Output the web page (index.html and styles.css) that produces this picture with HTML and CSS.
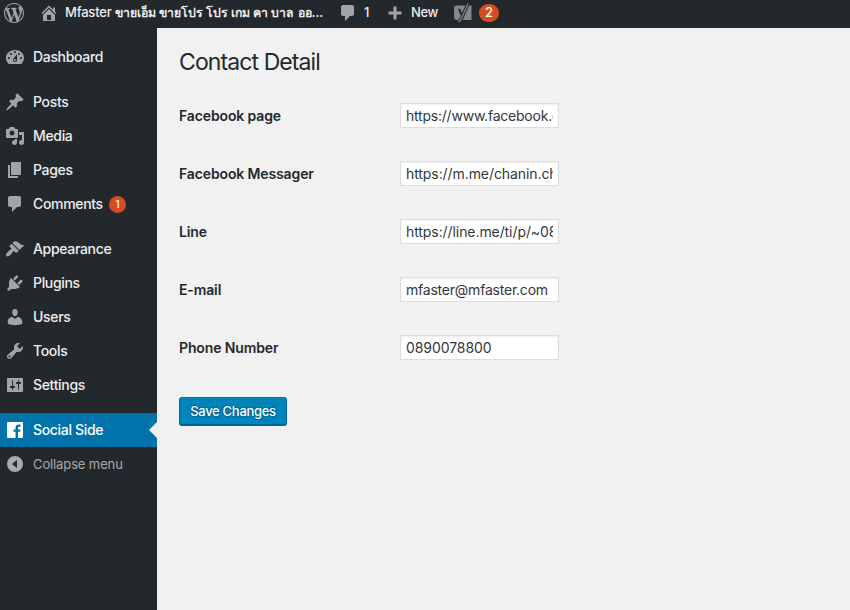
FILE: index.html
```html
<!DOCTYPE html>
<html lang="th">
<head>
<meta charset="utf-8">
<title>Contact Detail</title>
<link rel="stylesheet" href="styles.css">
</head>
<body>
<header class="bar">
  <svg class="icon logo" viewBox="0 0 20 20"><path d="M20 10c0-5.51-4.49-10-10-10C4.48 0 0 4.49 0 10c0 5.52 4.48 10 10 10 5.51 0 10-4.48 10-10zM7.78 15.37L4.37 6.22c.55-.02 1.17-.08 1.17-.08.5-.06.44-1.13-.06-1.11 0 0-1.45.11-2.37.11-.18 0-.37 0-.58-.01C4.12 2.69 6.87 1.11 10 1.11c2.33 0 4.45.87 6.05 2.34-.68-.11-1.65.39-1.65 1.58 0 .74.45 1.36.9 2.1.35.61.55 1.36.55 2.46 0 1.49-1.4 5-1.4 5l-3.03-8.37c.54-.02.82-.17.82-.17.5-.05.44-1.25-.06-1.22 0 0-1.44.12-2.38.12-.87 0-2.33-.12-2.33-.12-.5-.03-.56 1.2-.06 1.22l.92.08 1.26 3.41zM17.41 10c.24-.64.74-1.87.43-4.25.7 1.29 1.05 2.71 1.05 4.25 0 3.29-1.73 6.24-4.4 7.78.97-2.59 1.94-5.2 2.92-7.78zM6.1 18.09C3.12 16.65 1.11 13.53 1.11 10c0-1.3.23-2.48.72-3.59C3.25 10.3 4.67 14.2 6.1 18.09zm4.03-6.63l2.58 6.98c-.86.29-1.76.45-2.71.45-.79 0-1.57-.11-2.29-.33.81-2.38 1.62-4.74 2.42-7.1z"/></svg>
  <a class="bar-item site"><svg class="icon" viewBox="0 0 20 20"><path d="M16 8.5l1.53 1.53-1.06 1.06L10 4.6l-6.47 6.49-1.06-1.06L10 2.5l4 4v-2h2v4zm-6-2.46l6 5.99V18H4v-5.97zM12 17v-5H8v5h4z"/></svg><span class="site-latin">Mfaster</span><span class="site-thai">ขายเอ็ม ขายโปร โปร เกม คา บาล ออ...</span></a>
  <a class="bar-item talk"><svg class="icon" viewBox="0 0 20 20"><path d="M5 2h9c1.1 0 2 .9 2 2v7c0 1.1-.9 2-2 2h-2l-5 5v-5H5c-1.1 0-2-.9-2-2V4c0-1.1.9-2 2-2z"/></svg><span>1</span></a>
  <a class="bar-item new"><svg class="icon" viewBox="0 0 20 20"><path d="M8.5 3.5h3v5h5v3h-5v5h-3v-5h-5v-3h5z"/></svg><span>New</span></a>
  <a class="bar-item seo"><svg class="icon yoast" viewBox="0 0 20 20"><path class="tile" d="M4 2.5h14.500V17H4a3 3 0 0 1-3-3V5.500a3 3 0 0 1 3-3z"/><path class="leg" d="M6 6l3.400 7.500"/><path class="outline" d="M9.400 13.500L15 .5M9.400 13.500c-.8 2.900-1.800 4.700-4.200 5"/><path class="stroke" d="M9.400 13.500L15 .5M9.400 13.500c-.9 2.900-1.900 4.700-4.200 5"/></svg><span class="badge wide">2</span></a>
</header>
<div class="shell">
  <nav class="side">
    <a class="item"><svg class="icon" viewBox="0 0 20 20"><path fill-rule="evenodd" d="M3.76 17h12.48c1.34-1.42 2.76-3.57 2.76-6 0-4.97-4.03-8-9-8s-9 3.03-9 8c0 2.43 1.42 4.58 2.76 6zM10 4c.55 0 1 .45 1 1s-.45 1-1 1-1-.45-1-1 .45-1 1-1zM6 6c.55 0 1 .45 1 1s-.45 1-1 1-1-.45-1-1 .45-1 1-1zm8 0c.55 0 1 .45 1 1s-.45 1-1 1-1-.45-1-1 .45-1 1-1zm-5.37 5.55L12 7v6c0 1.1-.9 2-2 2s-2-.9-2-2c0-.57.24-1.08.63-1.45zM4 10c.55 0 1 .45 1 1s-.45 1-1 1-1-.45-1-1 .45-1 1-1zm12 0c.55 0 1 .45 1 1s-.45 1-1 1-1-.45-1-1 .45-1 1-1zm-5 3c0-.55-.45-1-1-1s-1 .45-1 1 .45 1 1 1 1-.45 1-1z"/></svg><span>Dashboard</span></a>
    <a class="item group"><svg class="icon" viewBox="0 0 20 20"><path d="M10.44 3.02l1.82-1.82 6.36 6.35-1.83 1.82c-1.05-.68-2.48-.57-3.41.36l-.75.75c-.92.93-1.04 2.35-.35 3.41l-1.83 1.82-2.41-2.41-2.8 2.79c-.42.42-3.38 2.71-3.8 2.29s1.86-3.39 2.28-3.81l2.79-2.79L4.1 9.36l1.83-1.82c1.05.69 2.48.57 3.4-.36l.75-.75c.93-.92 1.05-2.35.36-3.41z"/></svg><span>Posts</span></a>
    <a class="item"><svg class="icon" viewBox="0 0 20 20"><path fill-rule="evenodd" d="M13 11V4c0-.55-.45-1-1-1h-1.67L9 1H5L3.67 3H2c-.55 0-1 .45-1 1v7c0 .55.45 1 1 1h10c.55 0 1-.45 1-1zM7 4.5c1.38 0 2.5 1.12 2.5 2.5S8.38 9.5 7 9.5 4.5 8.38 4.5 7 5.62 4.5 7 4.5zM14 6h5v10.5c0 1.38-1.12 2.5-2.5 2.5S14 17.88 14 16.5s1.12-2.5 2.5-2.5c.17 0 .34.02.5.05V9h-3V6zm-4 8.05V13h2v3.5c0 1.38-1.12 2.5-2.5 2.5S7 17.88 7 16.5 8.12 14 9.5 14c.17 0 .34.02.5.05z"/></svg><span>Media</span></a>
    <a class="item"><svg class="icon" viewBox="0 0 20 20"><path d="M6 15V2h10v13H6zm-1 1h8v2H3V5h2v11z"/></svg><span>Pages</span></a>
    <a class="item"><svg class="icon" viewBox="0 0 20 20"><path d="M5 2h9c1.1 0 2 .9 2 2v7c0 1.1-.9 2-2 2h-2l-5 5v-5H5c-1.1 0-2-.9-2-2V4c0-1.1.9-2 2-2z"/></svg><span class="comments">Comments</span><span class="badge">1</span></a>
    <a class="item group"><svg class="icon" viewBox="0 0 20 20"><path d="M14.48 11.06L7.41 3.99l1.5-1.5c.5-.56 2.3-.47 3.51.32 1.21.8 1.43 1.28 2.91 2.1 1.18.64 2.45 1.26 4.45.85zm-.71.71L6.7 4.7 4.93 6.47c-.39.39-.39 1.02 0 1.41l1.06 1.06c.39.39.39 1.03 0 1.42-.6.6-1.43 1.11-2.21 1.69-.35.26-.7.53-1.01.84C1.43 14.23.4 16.08 1.4 17.07c.99 1 2.84-.03 4.18-1.36.31-.31.58-.66.85-1.02.57-.78 1.08-1.61 1.69-2.21.39-.39 1.02-.39 1.41 0l1.06 1.06c.39.39 1.02.39 1.41 0z"/></svg><span>Appearance</span></a>
    <a class="item"><svg class="icon" viewBox="0 0 20 20"><path d="M13.11 4.36L9.87 7.6 8 5.73l3.24-3.24c.35-.34 1.05-.2 1.56.32.52.51.66 1.21.31 1.55zm-8 1.77l.91-1.12 9.01 9.01-1.19.84c-.71.71-2.63 1.16-3.82 1.16H6.14L4.9 17.26c-.59.59-1.54.59-2.12 0-.59-.58-.59-1.53 0-2.12l1.24-1.24v-3.88c0-1.13.4-3.19 1.09-3.89zm7.26 3.97l3.24-3.24c.34-.35 1.04-.21 1.55.31.52.51.66 1.21.31 1.55l-3.24 3.25z"/></svg><span>Plugins</span></a>
    <a class="item"><svg class="icon" viewBox="0 0 20 20"><path d="M10 9.25c-2.27 0-2.73-3.44-2.73-3.44C7 4.02 7.82 2 9.97 2c2.16 0 2.98 2.02 2.71 3.81 0 0-.41 3.44-2.68 3.44zm0 2.57L12.72 10c2.39 0 4.52 2.33 4.52 4.53v2.49s-3.65 1.13-7.24 1.13c-3.65 0-7.24-1.13-7.24-1.13v-2.49c0-2.25 1.94-4.48 4.47-4.48z"/></svg><span>Users</span></a>
    <a class="item"><svg class="icon" viewBox="0 0 20 20"><path fill-rule="evenodd" d="M16.68 9.77c-1.34 1.34-3.3 1.67-4.95.99l-5.41 6.52c-.99.99-2.59.99-3.58 0s-.99-2.59 0-3.57l6.52-5.42c-.68-1.65-.35-3.61.99-4.95 1.28-1.28 3.12-1.62 4.72-1.06l-2.89 2.89 2.82 2.82 2.86-2.87c.53 1.58.18 3.39-1.08 4.65zM3.81 16.21c.4.39 1.04.39 1.43 0 .4-.4.4-1.04 0-1.43-.39-.4-1.03-.4-1.43 0-.39.39-.39 1.03 0 1.43z"/></svg><span>Tools</span></a>
    <a class="item"><svg class="icon" viewBox="0 0 20 20"><path fill-rule="evenodd" d="M18 16V4c0-.55-.45-1-1-1H3c-.55 0-1 .45-1 1v12c0 .55.45 1 1 1h14c.55 0 1-.45 1-1zM8 11h1c.55 0 1 .45 1 1s-.45 1-1 1H8v1.5c0 .28-.22.5-.5.5s-.5-.22-.5-.5V13H6c-.55 0-1-.45-1-1s.45-1 1-1h1V5.5c0-.28.22-.5.5-.5s.5.22.5.5V11zm5-2h-1c-.55 0-1-.45-1-1s.45-1 1-1h1V5.5c0-.28.22-.5.5-.5s.5.22.5.5V7h1c.55 0 1 .45 1 1s-.45 1-1 1h-1v5.5c0 .28-.22.5-.5.5s-.5-.22-.5-.5V9z"/></svg><span>Settings</span></a>
    <a class="item group current"><svg class="icon" viewBox="0 0 20 20"><path d="M2.89 2h14.23c.49 0 .88.39.88.88v14.24c0 .48-.39.88-.88.88h-4.08v-6.2h2.08l.31-2.41h-2.39V7.85c0-.7.2-1.18 1.2-1.18h1.28V4.51c-.22-.03-.98-.09-1.86-.09-1.85 0-3.11 1.12-3.11 3.19v1.78H8.46v2.41h2.09V18H2.89c-.49 0-.89-.4-.89-.88V2.88c0-.49.4-.88.89-.88z"/></svg><span>Social Side</span></a>
    <a class="item collapse"><svg class="icon" viewBox="0 0 20 20"><path fill-rule="evenodd" d="M10 2a8 8 0 1 1 0 16 8 8 0 0 1 0-16zm2 4L7 10l5 4z"/></svg><span>Collapse menu</span></a>
  </nav>
  <main class="content">
    <h1>Contact Detail</h1>
    <form>
      <div class="row"><label for="fb">Facebook page</label><input id="fb" class="tight" value="https://www.facebook.com/"></div>
      <div class="row"><label for="me">Facebook Messager</label><input id="me" value="https://m.me/chanin.ch"></div>
      <div class="row"><label for="ln">Line</label><input id="ln" value="https://line.me/ti/p/~0890078800"></div>
      <div class="row"><label for="em">E-mail</label><input id="em" class="tight" value="mfaster@mfaster.com"></div>
      <div class="row"><label for="ph">Phone Number</label><input id="ph" value="0890078800"></div>
      <button type="button">Save Changes</button>
    </form>
  </main>
</div>
</body>
</html>
```
FILE: styles.css
```css
* { box-sizing: border-box; }
body {
  margin: 0;
  height: 610px;
  overflow: hidden;
  background: #f1f1f1;
  color: #23282d;
  font-family: Inter, "Noto Sans", sans-serif;
  font-size: 14px;
}
.icon {
  flex: none;
  width: 20px;
  height: 20px;
  fill: #a0a5aa;
}
.bar {
  display: flex;
  align-items: center;
  height: 28px;
  padding: 0 0 3px 4px;
  background: #23282d;
  color: #eee;
  font-size: 13px;
  font-weight: 500;
  line-height: 25px;
  white-space: nowrap;
}
.bar-item { display: flex; align-items: center; }
.site { margin-left: 15px; width: 299px; }
.site-latin { margin-left: 6px; width: 50px; letter-spacing: -0.2px; }
.site-thai { font-size: 12.25px; font-weight: 600; }
.talk { width: 47px; }
.talk span { margin-left: 6px; }
.new { width: 68px; }
.new span { margin-left: 6px; letter-spacing: -0.4px; }
.bar .badge { margin-left: 6px; }
.yoast { overflow: visible; }
.yoast .tile { fill: #82878c; }
.yoast .leg { fill: none; stroke: #23282d; stroke-width: 2; }
.yoast .outline { fill: none; stroke: #23282d; stroke-width: 3.4; }
.yoast .stroke { fill: none; stroke: #82878c; stroke-width: 1.3; }
.badge {
  width: 17px;
  height: 17px;
  border-radius: 9px;
  background: #d54e21;
  color: #fff;
  font-size: 10px;
  line-height: 17px;
  text-align: center;
}
.badge.wide { width: 20px; height: 18px; font-size: 13px; line-height: 17px; }
.shell { display: flex; height: 582px; }
.side {
  width: 157px;
  padding-top: 12px;
  background: #23282d;
}
.item {
  position: relative;
  display: flex;
  align-items: center;
  gap: 8px;
  height: 34px;
  padding-left: 5px;
  color: #eee;
  font-weight: 500;
  line-height: 18px;
  letter-spacing: -0.33px;
}
.item .comments { width: 70px; }
.item .badge { margin-left: -2px; line-height: 17px; letter-spacing: 0; }
.group { margin-top: 11px; }
.current { background: #0073aa; color: #fff; }
.current .icon { fill: #fff; }
.current::after {
  content: "";
  position: absolute;
  right: 0;
  top: 9px;
  border: 8px solid transparent;
  border-left: 0;
  border-right-color: #f1f1f1;
}
.collapse { color: #aaa; font-size: 13px; font-weight: 400; letter-spacing: -0.12px; }
.collapse .icon { fill: #aaa; }
.content { flex: 1; padding: 20px 22px; }
h1 {
  margin: 0;
  font-size: 23px;
  font-weight: 400;
  line-height: 29px;
  letter-spacing: -0.9px;
}
form { padding-top: 9px; }
.row { display: flex; align-items: center; height: 58px; }
label { width: 221px; font-weight: 600; letter-spacing: -0.13px; }
input {
  width: 159px;
  height: 25px;
  padding: 3px 5px;
  border: 1px solid #ddd;
  background: #fff;
  box-shadow: inset 0 1px 2px rgba(0, 0, 0, .07);
  color: #32373c;
  font: 14px Inter, sans-serif;
  letter-spacing: -0.08px;
}
input.tight { letter-spacing: -0.22px; }
button {
  display: block;
  width: 108px;
  height: 28px;
  margin-top: 21px;
  padding: 0;
  border: 1px solid;
  border-color: #0073aa #006799 #006799;
  border-radius: 3px;
  background: #0085ba;
  box-shadow: 0 1px 0 #006799;
  color: #fff;
  font: 500 13px/26px Inter, sans-serif;
  letter-spacing: -0.3px;
  text-shadow: 0 -1px 1px #006799, 1px 0 1px #006799, 0 1px 1px #006799, -1px 0 1px #006799;
}
```
